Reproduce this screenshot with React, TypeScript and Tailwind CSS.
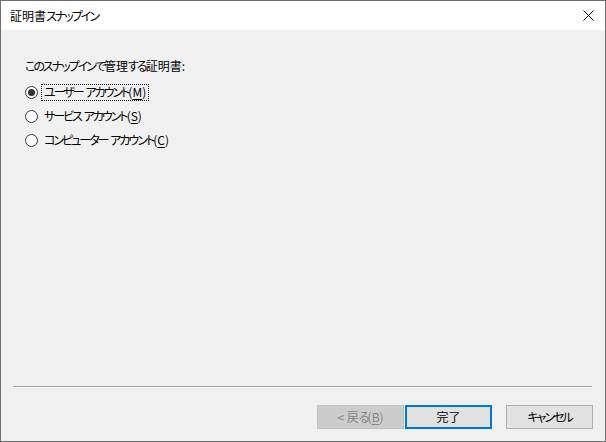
import React from "react";

const jp = "font-['Segoe_UI','Noto_Sans_CJK_JP',sans-serif] [font-feature-settings:'palt']";

type Choice = { id: string; label: string; key: string };

const choices: Choice[] = [
  { id: "user", label: "ユーザー アカウント", key: "M" },
  { id: "service", label: "サービス アカウント", key: "S" },
  { id: "computer", label: "コンピューター アカウント", key: "C" },
];

// kana in the dialog font is much narrower than Noto's, so tighten kana runs only
function Jp({ text }: { text: string }) {
  const runs = text.match(/[\u3040-\u30ff]+|[^\u3040-\u30ff]+/g) ?? [];
  return (
    <span>
      {runs.map((r, i) =>
        /[\u3040-\u30ff]/.test(r) ? (
          <span key={i} className="tracking-[-2px]">{r}</span>
        ) : (
          <span key={i}>{r.replace(/ /g, "\u00a0")}</span>
        )
      )}
    </span>
  );
}

function Mnemonic({ k }: { k: string }) {
  return (
    <span>
      (<span className="underline underline-offset-2">{k}</span>)
    </span>
  );
}

export default function App() {
  const selected = "user";

  return (
    <div className={`w-[606px] h-[442px] border border-[#6f6f6f] flex flex-col text-[12px] leading-[16px] text-black ${jp}`}>
      {/* Title bar */}
      <div className="h-[29px] bg-white flex items-center justify-between pl-[9px] pr-[10px]">
        <Jp text="証明書スナップイン" />
        <svg width="11" height="11" viewBox="0 0 11 11" className="mr-[1px]">
          <path d="M0.5 0.5L10.5 10.5M10.5 0.5L0.5 10.5" stroke="#000" strokeWidth="1" />
        </svg>
      </div>

      {/* Body */}
      <div className="flex-1 bg-[#f0f0f0] flex flex-col">
        <div className="pl-[24px] pt-[28px]">
          <p><Jp text="このスナップインで管理する証明書:" /></p>
          <div className="mt-[6px] flex flex-col">
            {choices.map(c => (
              <label key={c.id} className="h-[24px] flex items-center">
                <span className="w-[13px] h-[13px] rounded-full border border-[#333333] bg-white flex items-center justify-center">
                  {selected === c.id && <span className="w-[7px] h-[7px] rounded-full bg-[#333333]" />}
                </span>
                <span
                  className={`ml-[3px] px-[2px] h-[17px] flex items-center border border-dotted ${
                    selected === c.id ? "border-black" : "border-transparent"
                  }`}
                >
                  <span>
                    <Jp text={c.label} />
                    <Mnemonic k={c.key} />
                  </span>
                </span>
              </label>
            ))}
          </div>
        </div>

        <div className="flex-1" />

        {/* Separator */}
        <div className="ml-[12px] mr-[13px] border-t border-[#a0a0a0] border-b border-b-white" />

        {/* Buttons */}
        <div className="mt-[17px] mb-[12px] pr-[12px] flex justify-end items-center">
          <button
            disabled
            className="w-[87px] h-[24px] bg-[#cccccc] border border-[#bfbfbf] text-[#838383] flex items-center justify-center"
          >
            <span>
              &lt;&nbsp;<Jp text="戻る" /><Mnemonic k="B" />
            </span>
          </button>
          <button className="ml-[1px] w-[87px] h-[24px] bg-[#e1e1e1] border-2 border-[#0078d7] flex items-center justify-center">
            完了
          </button>
          <button className="ml-[14px] w-[87px] h-[24px] bg-[#e1e1e1] border border-[#adadad] flex items-center justify-center">
            <Jp text="キャンセル" />
          </button>
        </div>
      </div>
    </div>
  );
}
